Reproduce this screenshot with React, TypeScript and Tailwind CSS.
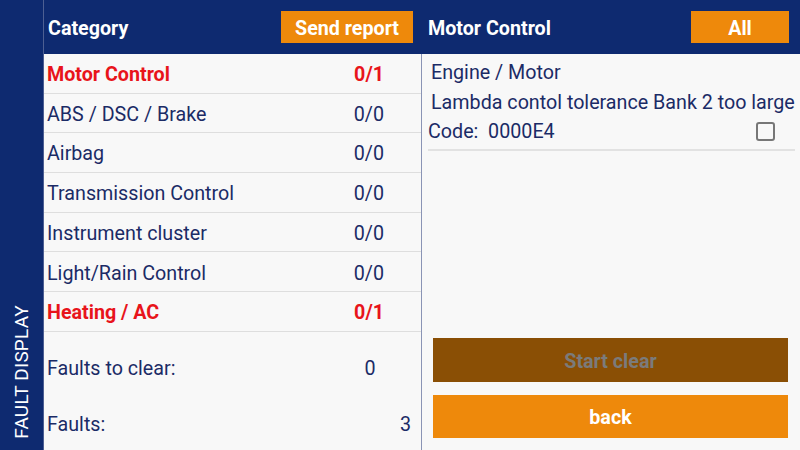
import React from 'react';

interface Category {
  name: string;
  count: string;
  alert?: boolean;
}

const categories: Category[] = [
  { name: 'Motor Control', count: '0/1', alert: true },
  { name: 'ABS / DSC / Brake', count: '0/0' },
  { name: 'Airbag', count: '0/0' },
  { name: 'Transmission Control', count: '0/0' },
  { name: 'Instrument cluster', count: '0/0' },
  { name: 'Light/Rain Control', count: '0/0' },
  { name: 'Heating / AC', count: '0/1', alert: true },
];

const App: React.FC = () => {
  return (
    <div
      className="w-[800px] h-[450px] flex bg-[#f8f8f8] overflow-hidden"
      style={{ fontFamily: 'Roboto, "Liberation Sans", sans-serif' }}
    >
      {/* side tab */}
      <div className="w-[43px] h-full bg-[#0e2a70] flex items-end justify-center pb-[11px]">
        <span className="[writing-mode:vertical-rl] rotate-180 text-white text-[19px] leading-none tracking-[0.2px]">
          FAULT DISPLAY
        </span>
      </div>

      <div className="flex-1 flex flex-col border-l border-[#4d5f92]">
        {/* header */}
        <div className="h-[54px] bg-[#0e2a70] flex items-center">
          <div className="w-[378px] flex items-center justify-between pl-[4px] pr-[9px]">
            <span className="text-white font-bold text-[19.7px] pt-[4px]">Category</span>
            <button className="w-[132px] h-[32px] pt-[3px] bg-[#ee890b] text-white font-bold text-[19.7px]">
              Send report
            </button>
          </div>
          <div className="flex-1 flex items-center justify-between pl-[6px] pr-[11px]">
            <span className="text-white font-bold text-[19.7px] pt-[4px]">Motor Control</span>
            <button className="w-[98px] h-[32px] pt-[3px] bg-[#ee890b] text-white font-bold text-[19.7px]">
              All
            </button>
          </div>
        </div>

        <div className="flex-1 flex">
          {/* category list */}
          <div className="w-[378px] flex flex-col border-r border-[#8a94b5]">
            {categories.map((c) => (
              <div
                key={c.name}
                className={`h-[39.7px] flex items-center pl-[3px] pt-[3px] border-b border-[#dedede] text-[19.7px] ${
                  c.alert ? 'text-[#e8141b] font-bold' : 'text-[#1b2b66]'
                }`}
              >
                <span className="flex-1">{c.name}</span>
                <span className="w-[60px] text-right mr-[37px]">{c.count}</span>
              </div>
            ))}
            <div className="flex-1 flex flex-col text-[19.7px] text-[#1b2b66] pl-[3px]">
              <div className="h-[70px] flex items-center pt-[4px]">
                <span className="flex-1">Faults to clear:</span>
                <span className="w-[20px] text-center mr-[41px]">0</span>
              </div>
              <div className="flex-1 flex items-center pb-[3px]">
                <span className="flex-1">Faults:</span>
                <span className="w-[20px] text-right mr-[10px]">3</span>
              </div>
            </div>
          </div>

          {/* fault detail */}
          <div className="flex-1 flex flex-col pl-[6px] pr-[5px] text-[19.7px] text-[#1b2b66]">
            <div className="h-[30px] mt-[4px] flex items-center pl-[3px]">Engine / Motor</div>
            <div className="h-[30px] flex items-center pl-[3px] whitespace-nowrap">
              Lambda contol tolerance Bank 2 too large
            </div>
            <div className="h-[33px] flex items-center pb-[3px] border-b-2 border-[#e2e2e2]">
              <span className="flex-1 whitespace-pre">Code:  0000E4</span>
              <span className="w-[19px] h-[19px] border-2 border-[#777777] rounded-[3px] mr-[20px] -mt-[1px]" />
            </div>
            <div className="flex-1" />
            <div className="flex flex-col gap-[13px] pl-[5px] pr-[7px] pb-[12px]">
              <button className="h-[44px] pt-[3px] bg-[#8a4f05] text-[#7b7b7b] font-bold text-[19.7px]">
                Start clear
              </button>
              <button className="h-[43px] pt-[3px] bg-[#ee890b] text-white font-bold text-[19.7px]">
                back
              </button>
            </div>
          </div>
        </div>
      </div>
    </div>
  );
};

export default App;
